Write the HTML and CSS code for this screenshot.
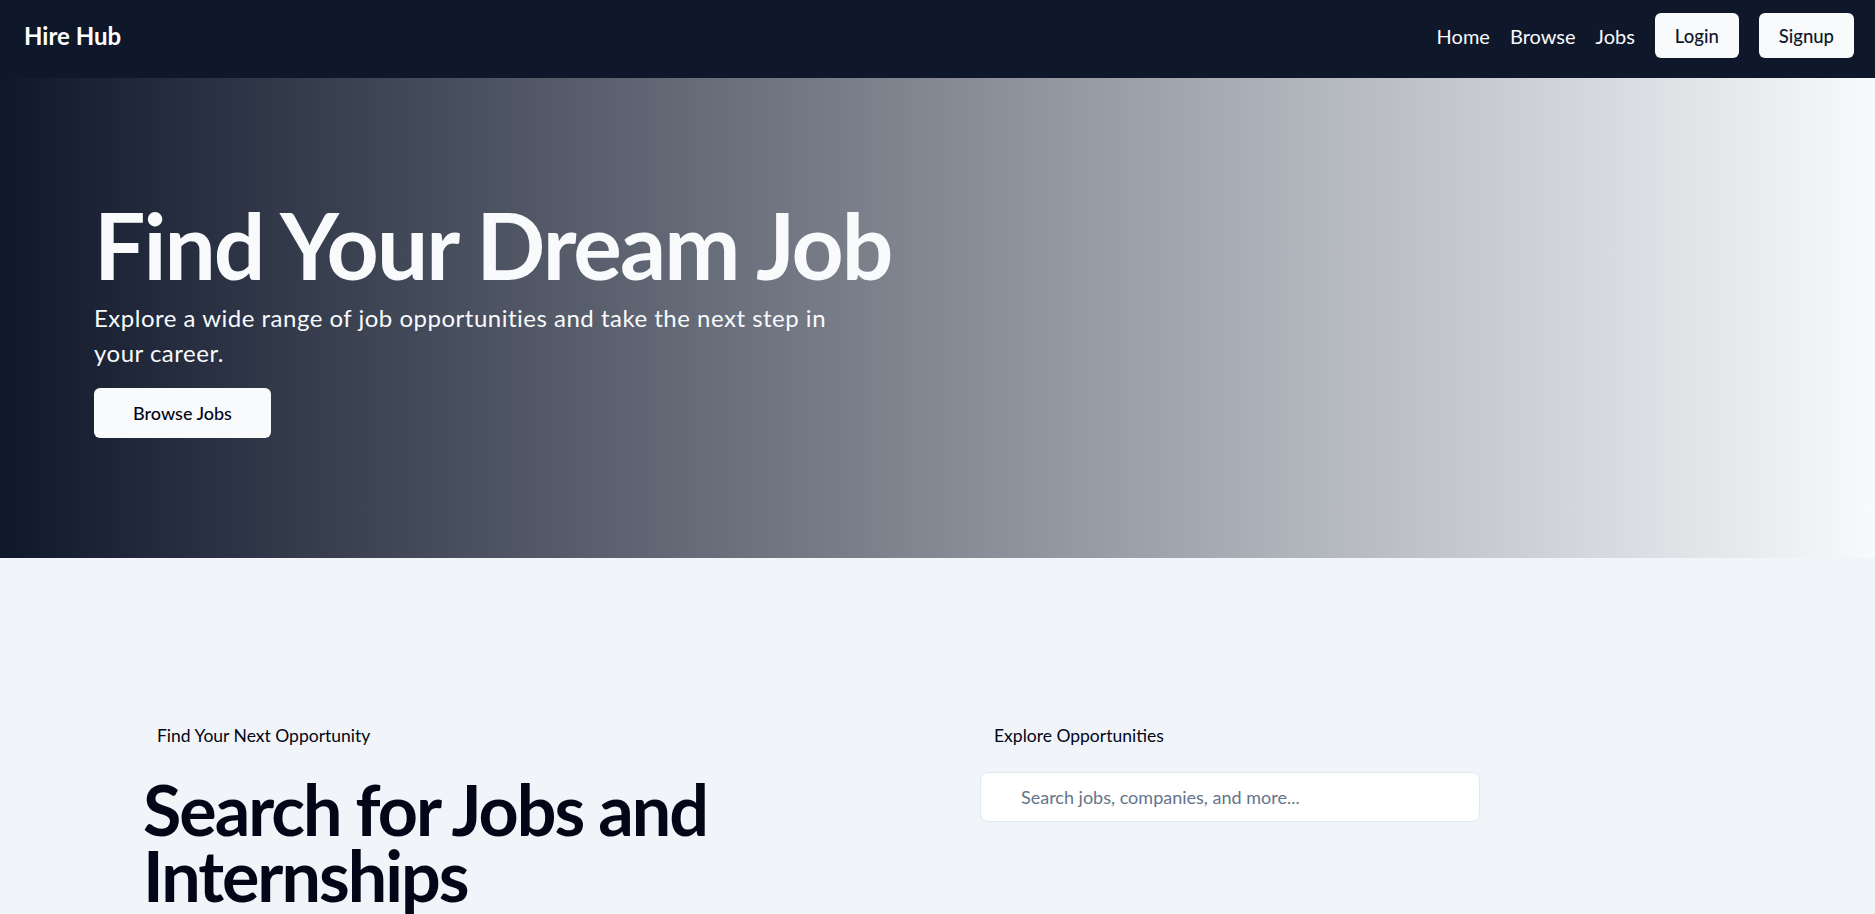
FILE: index.html
```html
<!DOCTYPE html>
<html lang="en">
<head>
<meta charset="utf-8">
<title>Hire Hub</title>
<link rel="stylesheet" href="styles.css">
</head>
<body>
<header class="nav">
  <a class="logo" href="#">Hire Hub</a>
  <nav class="nav-right">
    <a class="nav-link" href="#">Home</a>
    <a class="nav-link" href="#">Browse</a>
    <a class="nav-link" href="#">Jobs</a>
    <a class="nav-btn" href="#">Login</a>
    <a class="nav-btn" href="#">Signup</a>
  </nav>
</header>
<section class="hero">
  <h1 class="hero-title">Find Your Dream Job</h1>
  <p class="hero-sub">Explore a wide range of job opportunities and take the next step in your career.</p>
  <a class="hero-btn" href="#">Browse Jobs</a>
</section>
<section class="search">
  <div class="search-left">
    <p class="label">Find Your Next Opportunity</p>
    <h2 class="search-title">Search for Jobs and Internships</h2>
  </div>
  <div class="search-right">
    <p class="label">Explore Opportunities</p>
    <input class="search-input" type="text" placeholder="Search jobs, companies, and more...">
  </div>
</section>
</body>
</html>
```
FILE: styles.css
```css
* { box-sizing: border-box; }
html, body { margin: 0; padding: 0; }
body {
  font-family: "Lato", "Open Sans", sans-serif;
  background: #f1f5f9;
  color: #020617;
}
a { text-decoration: none; color: inherit; }

.nav {
  height: 78px;
  background: #0f172a;
  display: flex;
  align-items: center;
  justify-content: space-between;
  padding: 0 21px 7px 24px;
}
.logo {
  color: #ffffff;
  font-size: 24px;
  font-weight: 700;
}
.nav-right {
  display: flex;
  align-items: center;
  gap: 20px;
}
.nav-link {
  color: #f8fafc;
  font-size: 20px;
}
.nav-btn {
  height: 45px;
  padding: 0 20px;
  display: flex;
  align-items: center;
  background: #f8fafc;
  color: #0f172a;
  border-radius: 6px;
  font-size: 18.5px;
  font-weight: 500;
}

.hero {
  height: 480px;
  background: linear-gradient(to right, #0f172a, #f8fafc);
  display: flex;
  flex-direction: column;
  justify-content: center;
  align-items: flex-start;
  padding-left: 94px;
}
.hero-title {
  margin: 0;
  color: #f8fafc;
  font-size: 91px;
  line-height: 1;
  font-weight: 700;
  letter-spacing: -2px;
}
.hero-sub {
  margin: 10px 0 18px;
  max-width: 768px;
  color: #f8fafc;
  font-size: 24px;
  line-height: 35px;
  letter-spacing: 0.5px;
}
.hero-btn {
  height: 50px;
  width: 177px;
  display: flex;
  align-items: center;
  justify-content: center;
  background: #f8fafc;
  color: #020617;
  border-radius: 6px;
  font-size: 18px;
  font-weight: 500;
}

.search {
  display: grid;
  grid-template-columns: 837px 500px;
  padding: 164px 0 0 143px;
  height: 356px;
}
.label {
  margin: 0;
  padding-left: 14px;
  font-size: 17.5px;
  line-height: 28px;
  color: #020617;
}
.search-title {
  margin: 26px 0 0;
  max-width: 720px;
  font-size: 70px;
  line-height: 66px;
  font-weight: 700;
  letter-spacing: -2px;
  color: #020617;
}
.search-input {
  display: block;
  margin-top: 22px;
  width: 500px;
  height: 50px;
  border: 1px solid #e2e8f0;
  border-radius: 8px;
  background: #ffffff;
  padding: 0 16px 0 40px;
  font-family: inherit;
  font-size: 18px;
  color: #0f172a;
  outline: none;
}
.search-input::placeholder { color: #64748b; }
```
